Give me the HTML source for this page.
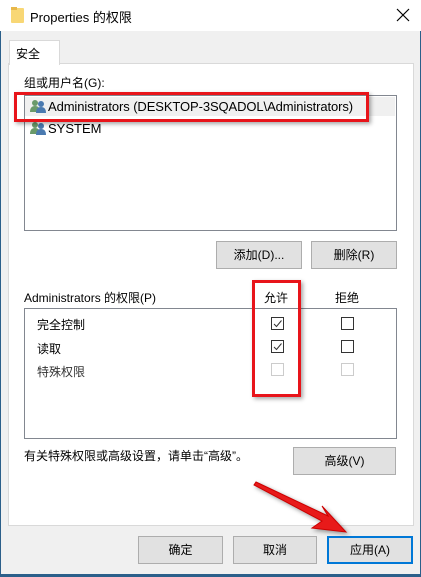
<!DOCTYPE html>
<html><head><meta charset="utf-8"><style>
*{margin:0;padding:0;box-sizing:border-box}
body{width:421px;height:577px;overflow:hidden;background:#f0f0f0;font-family:"Liberation Sans","Noto Sans CJK SC",sans-serif;font-size:12px;color:#000;position:relative}
.a{position:absolute}
.btn{position:absolute;background:#e1e1e1;border:1px solid #adadad;text-align:center;font-size:12px}
.cb{position:absolute;width:13px;height:13px;border:1px solid #333;background:#fff}
.cb.d{border-color:#ccc}
.t{position:absolute;white-space:nowrap}
</style></head><body>
<div class="a" style="left:0;top:0;width:421px;height:31px;background:#fff"></div>
<div class="a" style="left:11px;top:8px;width:13px;height:15px;background:#f8d775;border-radius:1px"></div>
<div class="a" style="left:11px;top:7px;width:6px;height:3px;background:#e8b84a"></div>
<div class="t" style="left:30px;top:7px;font-size:13px">Properties 的权限</div>
<svg class="a" style="left:396px;top:8px" width="14" height="14"><path d="M1 1L13 13M13 1L1 13" stroke="#000" stroke-width="1.2"/></svg>
<div class="a" style="left:0;top:31px;width:1px;height:546px;background:#2b5f8a"></div>
<div class="a" style="left:420px;top:31px;width:1px;height:546px;background:#2b5f8a"></div>
<div class="a" style="left:0;top:574px;width:421px;height:3px;background:#2b5f8a"></div>
<div class="a" style="left:8px;top:63px;width:406px;height:463px;background:#fff;border:1px solid #d9d9d9"></div>
<div class="a" style="left:9px;top:40px;width:51px;height:25px;background:#fff;border:1px solid #d9d9d9;border-bottom:none"></div>
<div class="t" style="left:16px;top:45px">安全</div>
<div class="t" style="left:24px;top:74px">组或用户名(G):</div>
<div class="a" style="left:24px;top:95px;width:373px;height:136px;border:1px solid #828790;background:#fff"></div>
<div class="a" style="left:25px;top:97px;width:370px;height:19px;background:#f0f0f0"></div>
<svg class="a" style="left:30px;top:99px" width="16" height="14"><circle cx="5" cy="4" r="3" fill="#6a9a6a"/><path d="M0 13Q0 7 5 7Q10 7 10 13Z" fill="#6a9a6a"/><circle cx="11" cy="5" r="3" fill="#4a7ab0"/><path d="M6 14Q6 8 11 8Q16 8 16 14Z" fill="#4a7ab0"/></svg>
<div class="t" style="left:48px;top:99px;font-size:13px;letter-spacing:-0.1px">Administrators (DESKTOP-3SQADOL\Administrators)</div>
<svg class="a" style="left:30px;top:121px" width="16" height="14"><circle cx="5" cy="4" r="3" fill="#6a9a6a"/><path d="M0 13Q0 7 5 7Q10 7 10 13Z" fill="#6a9a6a"/><circle cx="11" cy="5" r="3" fill="#4a7ab0"/><path d="M6 14Q6 8 11 8Q16 8 16 14Z" fill="#4a7ab0"/></svg>
<div class="t" style="left:48px;top:121px;font-size:13px">SYSTEM</div>
<div class="a" style="left:14px;top:92px;width:355px;height:30px;border:3px solid #e8141a;box-shadow:2px 2px 4px rgba(0,0,0,.35)"></div>
<div class="btn" style="left:216px;top:241px;width:86px;height:28px;line-height:26px">添加(D)...</div>
<div class="btn" style="left:311px;top:241px;width:86px;height:28px;line-height:26px">删除(R)</div>
<div class="t" style="left:24px;top:289px">Administrators 的权限(P)</div>
<div class="t" style="left:264px;top:289px">允许</div>
<div class="t" style="left:335px;top:289px">拒绝</div>
<div class="a" style="left:24px;top:308px;width:373px;height:131px;border:1px solid #828790;background:#fff"></div>
<div class="t" style="left:37px;top:316px">完全控制</div>
<div class="t" style="left:37px;top:340px">读取</div>
<div class="t" style="left:37px;top:363px;color:#333">特殊权限</div>
<div class="cb" style="left:271px;top:317px"><svg width="11" height="11" style="display:block"><path d="M2 6L4.5 8.5L9.5 2.5" stroke="#333" fill="none"/></svg></div>
<div class="cb" style="left:271px;top:340px"><svg width="11" height="11" style="display:block"><path d="M2 6L4.5 8.5L9.5 2.5" stroke="#333" fill="none"/></svg></div>
<div class="cb d" style="left:271px;top:363px"></div>
<div class="cb" style="left:341px;top:317px"></div>
<div class="cb" style="left:341px;top:340px"></div>
<div class="cb d" style="left:341px;top:363px"></div>
<div class="a" style="left:252px;top:280px;width:49px;height:117px;border:3px solid #e8141a;box-shadow:2px 2px 4px rgba(0,0,0,.35)"></div>
<div class="t" style="left:24px;top:447px">有关特殊权限或高级设置，请单击“高级”。</div>
<div class="btn" style="left:293px;top:447px;width:103px;height:28px;line-height:26px">高级(V)</div>
<div class="btn" style="left:138px;top:536px;width:85px;height:28px;line-height:26px">确定</div>
<div class="btn" style="left:233px;top:536px;width:84px;height:28px;line-height:26px">取消</div>
<div class="btn" style="left:327px;top:536px;width:86px;height:28px;line-height:24px;border:2px solid #0078d7">应用(A)</div>
<svg class="a" style="left:250px;top:478px" width="110" height="62"><path d="M6 4L78 38L72 28L96 54L62 50L72 43L4 7Z" fill="#e81a1a" stroke="#c00" stroke-width="1" filter="drop-shadow(2px 2px 2px rgba(0,0,0,.4))"/></svg>
</body></html>
